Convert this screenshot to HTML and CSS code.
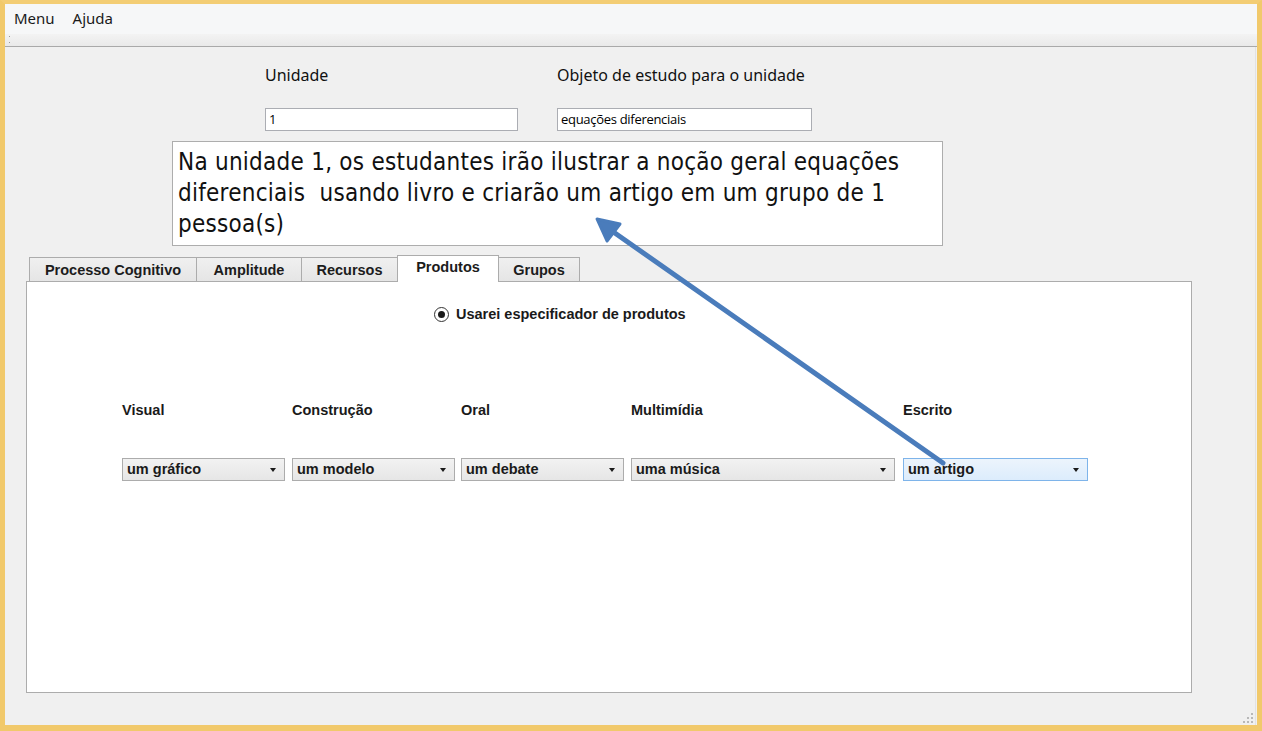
FILE: index.html
```html
<!DOCTYPE html>
<html lang="pt">
<head>
<meta charset="utf-8">
<title>Unidade</title>
<link rel="stylesheet" href="styles.css">
</head>
<body>
<div class="window">
  <div class="menubar">
    <span class="menu-item">Menu</span>
    <span class="menu-item">Ajuda</span>
  </div>
  <div class="toolbar"><span class="grip"></span></div>
  <div class="client">
    <div class="fields">
      <div class="field f-unit">
        <label class="field-label">Unidade</label>
        <div class="line-edit">1</div>
      </div>
      <div class="field f-obj">
        <label class="field-label">Objeto de estudo para o unidade</label>
        <div class="line-edit">equações diferenciais</div>
      </div>
    </div>
    <div class="summary">Na unidade 1, os estudantes irão ilustrar a noção geral equações diferenciais&nbsp; usando livro e criarão um artigo em um grupo de 1 pessoa(s)</div>
    <div class="tabs">
      <div class="tab-bar">
        <div class="tab t1">Processo Cognitivo</div>
        <div class="tab t2">Amplitude</div>
        <div class="tab t3">Recursos</div>
        <div class="tab t4 active">Produtos</div>
        <div class="tab t5">Grupos</div>
      </div>
      <div class="panel">
        <div class="radio-row">
          <span class="radio"><span class="dot"></span></span>
          <span class="radio-label">Usarei especificador de produtos</span>
        </div>
        <div class="products">
          <div class="prod c1"><div class="prod-label">Visual</div><div class="combo">um gráfico<span class="caret"></span></div></div>
          <div class="prod c2"><div class="prod-label">Construção</div><div class="combo">um modelo<span class="caret"></span></div></div>
          <div class="prod c3"><div class="prod-label">Oral</div><div class="combo">um debate<span class="caret"></span></div></div>
          <div class="prod c4"><div class="prod-label">Multimídia</div><div class="combo">uma música<span class="caret"></span></div></div>
          <div class="prod c5"><div class="prod-label">Escrito</div><div class="combo hover">um artigo<span class="caret"></span></div></div>
        </div>
      </div>
    </div>
    <span class="size-grip">
      <svg width="10" height="10" viewBox="0 0 10 10"><g fill="#b8b8b8"><rect x="8" y="0" width="2" height="2"/><rect x="4" y="4" width="2" height="2"/><rect x="8" y="4" width="2" height="2"/><rect x="0" y="8" width="2" height="2"/><rect x="4" y="8" width="2" height="2"/><rect x="8" y="8" width="2" height="2"/></g></svg>
    </span>
  </div>
  <svg class="arrow" width="1262" height="731" viewBox="0 0 1262 731">
    <line x1="943" y1="463" x2="612" y2="231" stroke="#4a7cbb" stroke-width="5" stroke-linecap="round"/>
    <polygon points="597,219 620,224 607,241" fill="#4a7cbb" stroke="#4a7cbb" stroke-width="3" stroke-linejoin="round"/>
  </svg>
</div>
</body>
</html>
```
FILE: styles.css
```css
html, body {
  margin: 0;
  padding: 0;
}
body {
  width: 1262px;
  height: 731px;
  overflow: hidden;
  background: #f1c96b;
  font-family: "Noto Sans", "Open Sans", "Liberation Sans", sans-serif;
  color: #000;
}
.window {
  position: relative;
  box-sizing: border-box;
  width: 1262px;
  height: 731px;
  border-top: 4px solid #f3cd74;
  border-left: 5px solid #f1c96b;
  border-right: 5px solid #f1c96b;
  border-bottom: 6px solid #f1c96b;
  background: #f0f0f0;
  display: flex;
  flex-direction: column;
}
.menubar {
  height: 30px;
  background: #f6f7f8;
  display: flex;
  align-items: center;
  padding-left: 9px;
  gap: 18px;
  font-size: 15px;
  box-sizing: border-box;
  padding-bottom: 2px;
}
.menu-item {
  color: #1a1a1a;
}
.toolbar {
  height: 12px;
  background: linear-gradient(#f3f3f3, #e9e9e9);
  border-bottom: 1px solid #a9a9a9;
  position: relative;
}
.grip {
  position: absolute;
  left: 4px;
  top: 2px;
  width: 1px;
  height: 5px;
  border-top: 1px solid #999;
  border-bottom: 1px solid #999;
}
.client {
  flex: 1;
  position: relative;
  border-right: 1px solid #e2e2e2;
  margin-right: 1px;
}
.fields {
  display: flex;
  padding-left: 260px;
  padding-top: 17px;
  gap: 39px;
}
.field {
  display: flex;
  flex-direction: column;
}
.f-unit { width: 253px; }
.f-obj { width: 255px; }
.field-label {
  font-size: 16px;
  height: 24px;
  line-height: 22px;
  color: #111;
  margin-bottom: 20px;
}
.line-edit {
  box-sizing: border-box;
  height: 23px;
  background: #fff;
  border: 1px solid #abadb3;
  font-size: 13px;
  line-height: 21px;
  padding-left: 3px;
  font-family: "Open Sans", "Noto Sans", sans-serif;
  letter-spacing: -0.3px;
}
.summary {
  box-sizing: border-box;
  margin-left: 167px;
  margin-top: 10px;
  width: 771px;
  height: 105px;
  background: #fff;
  border: 1px solid #adadad;
  padding: 5px 5px 0 5px;
  font-family: "DejaVu Sans Condensed", "DejaVu Sans", sans-serif;
  font-stretch: semi-condensed;
  font-size: 24px;
  line-height: 31px;
  letter-spacing: 0.25px;
  color: #111;
}
.tabs {
  margin-left: 21px;
  margin-top: 9px;
  width: 1166px;
}
.tab-bar {
  display: flex;
  padding-left: 3px;
  height: 26px;
  align-items: flex-end;
  position: relative;
  z-index: 1;
}
.tab {
  box-sizing: border-box;
  height: 24px;
  background: linear-gradient(#f0f0f0, #e5e5e5);
  border: 1px solid #acacac;
  border-bottom: none;
  font-family: "Liberation Sans", Arial, sans-serif;
  font-weight: bold;
  font-size: 14.5px;
  line-height: 24px;
  text-align: center;
  color: #1c1c1c;
  margin-right: -1px;
}
.t1 { width: 168px; }
.t2 { width: 106px; }
.t3 { width: 97px; }
.t4 { width: 102px; }
.t5 { width: 82px; }
.tab.active {
  background: #fff;
  line-height: 22px;
  margin-bottom: -1px;
  height: 27px;
  position: relative;
  z-index: 2;
}
.panel {
  box-sizing: border-box;
  height: 412px;
  background: #fff;
  border: 1px solid #acacac;
  position: relative;
}
.radio-row {
  display: flex;
  align-items: center;
  padding-left: 407px;
  padding-top: 24px;
  gap: 7px;
}
.radio {
  box-sizing: border-box;
  width: 15px;
  height: 15px;
  border-radius: 50%;
  border: 1px solid #333;
  background: #fff;
  display: flex;
  align-items: center;
  justify-content: center;
}
.dot {
  width: 7px;
  height: 7px;
  border-radius: 50%;
  background: #1a1a1a;
}
.radio-label {
  font-family: "Liberation Sans", Arial, sans-serif;
  font-weight: bold;
  font-size: 14.5px;
  color: #1a1a1a;
}
.products {
  display: flex;
  padding-left: 95px;
  padding-top: 80px;
}
.prod {
  display: flex;
  flex-direction: column;
}
.c1 { width: 163px; margin-right: 7px; }
.c2 { width: 163px; margin-right: 6px; }
.c3 { width: 163px; margin-right: 7px; }
.c4 { width: 264px; margin-right: 8px; }
.c5 { width: 185px; }
.prod-label {
  font-family: "Liberation Sans", Arial, sans-serif;
  font-weight: bold;
  font-size: 14.5px;
  height: 16px;
  line-height: 16px;
  color: #1a1a1a;
  margin-bottom: 40px;
}
.combo {
  box-sizing: border-box;
  height: 23px;
  background: linear-gradient(#f2f2f2, #e6e6e6);
  border: 1px solid #acacac;
  font-family: "Liberation Sans", Arial, sans-serif;
  font-weight: bold;
  font-size: 14.5px;
  line-height: 21px;
  padding-left: 4px;
  color: #1a1a1a;
  position: relative;
}
.combo.hover {
  background: linear-gradient(#ecf4fc, #dcecfc);
  border-color: #7eb4ea;
}
.caret {
  position: absolute;
  right: 8px;
  top: 9px;
  width: 0;
  height: 0;
  border-left: 3.5px solid transparent;
  border-right: 3.5px solid transparent;
  border-top: 4px solid #1a1a1a;
}
.size-grip {
  position: absolute;
  right: 2px;
  bottom: 2px;
  line-height: 0;
}
.arrow {
  position: absolute;
  left: -5px;
  top: -4px;
  pointer-events: none;
}
```
